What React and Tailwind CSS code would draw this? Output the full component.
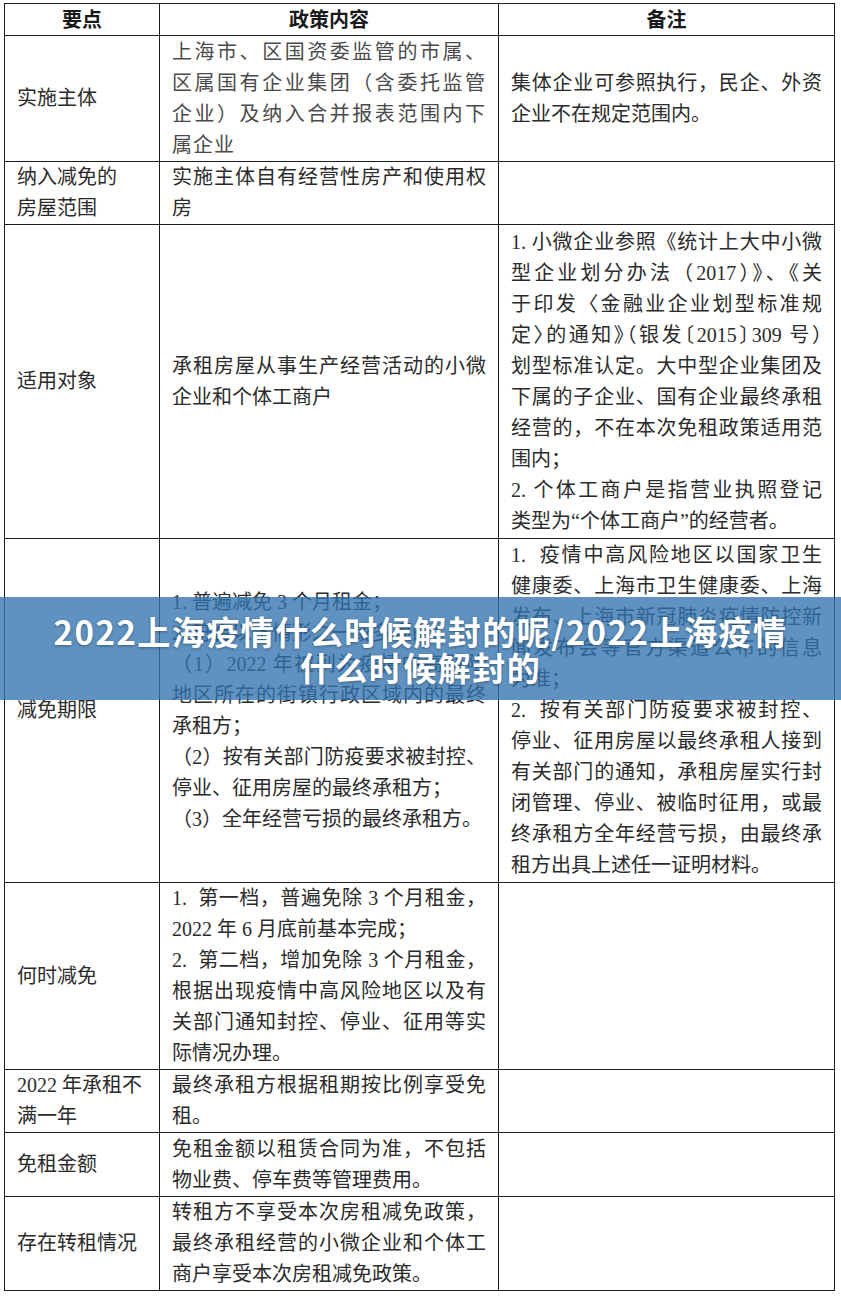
import React from 'react';

const rows = [
  {
    h: 'h-[126px]',
    c1: [['实施主体']],
    c2: [['上海市、区国资委监管的市属、', '区属国有企业集团（含委托监管', '企业）及纳入合并报表范围内下', '属企业']],
    c3: [['集体企业可参照执行，民企、外资', '企业不在规定范围内。']],
  },
  {
    h: 'h-[63px]',
    c1: [['纳入减免的', '房屋范围']],
    c2: [['实施主体自有经营性房产和使用权', '房']],
    c3: [],
  },
  {
    h: 'h-[314px]',
    c1: [['适用对象']],
    c2: [['承租房屋从事生产经营活动的小微', '企业和个体工商户']],
    c3: [
      [
        '1. 小微企业参照《统计上大中小微',
        '型企业划分办法（2017）》、《关',
        '于印发〈金融业企业划型标准规',
        '定〉的通知》（银发〔2015〕309 号）',
        '划型标准认定。大中型企业集团及',
        '下属的子企业、国有企业最终承租',
        '经营的，不在本次免租政策适用范',
        '围内；',
      ],
      ['2. 个体工商户是指营业执照登记', '类型为“个体工商户”的经营者。'],
    ],
  },
  {
    h: 'h-[344px]',
    c1: [['减免期限']],
    c2: [
      ['1. 普遍减免 3 个月租金；'],
      ['2. 符合以下情形之一或多项的：'],
      ['（1）2022 年被列为疫情中高风险', '地区所在的街镇行政区域内的最终', '承租方；'],
      ['（2）按有关部门防疫要求被封控、', '停业、征用房屋的最终承租方；'],
      ['（3）全年经营亏损的最终承租方。'],
    ],
    c3: [
      [
        '1.\u00a0\u00a0疫情中高风险地区以国家卫生',
        '健康委、上海市卫生健康委、上海',
        '发布、上海市新冠肺炎疫情防控新',
        '闻发布会等官方渠道公布的信息',
        '为准；',
      ],
      [
        '2.\u00a0\u00a0按有关部门防疫要求被封控、',
        '停业、征用房屋以最终承租人接到',
        '有关部门的通知，承租房屋实行封',
        '闭管理、停业、被临时征用，或最',
        '终承租方全年经营亏损，由最终承',
        '租方出具上述任一证明材料。',
      ],
    ],
  },
  {
    h: 'h-[187px]',
    c1: [['何时减免']],
    c2: [
      ['1.\u00a0\u00a0第一档，普遍免除 3 个月租金，', '2022 年 6 月底前基本完成；'],
      [
        '2.\u00a0\u00a0第二档，增加免除 3 个月租金，',
        '根据出现疫情中高风险地区以及有',
        '关部门通知封控、停业、征用等实',
        '际情况办理。',
      ],
    ],
    c3: [],
  },
  {
    h: 'h-[63px]',
    c1: [['2022 年承租不', '满一年']],
    c2: [['最终承租方根据租期按比例享受免', '租。']],
    c3: [],
  },
  {
    h: 'h-[64px]',
    c1: [['免租金额']],
    c2: [['免租金额以租赁合同为准，不包括', '物业费、停车费等管理费用。']],
    c3: [],
  },
  {
    h: 'h-[94px]',
    c1: [['存在转租情况']],
    c2: [['转租方不享受本次房租减免政策，', '最终承租经营的小微企业和个体工', '商户享受本次房租减免政策。']],
    c3: [],
  },
];

// every line but the last of a paragraph is stretched to the cell width, like Word does
const Cell = ({ paras, justify = true, className = '' }) => (
  <td className={`border border-[#1c1c1c] px-[12px] align-middle ${className}`}>
    {paras.map((lines, pi) =>
      lines.map((line, li) => {
        const full = justify && li < lines.length - 1;
        const tight = line.includes('〔');
        return (
          <div
            key={`${pi}-${li}`}
            className={`whitespace-nowrap ${full ? 'text-justify [text-align-last:justify]' : ''} ${
              tight ? "[font-feature-settings:'halt']" : ''
            }`}
          >
            {line}
          </div>
        );
      })
    )}
  </td>
);

export default function App() {
  return (
    <div className="relative h-[1296px] w-[841px] overflow-hidden bg-white">
      <div className="pl-[4px] pt-[3px]">
        <table className="w-[830px] table-fixed border-collapse font-['Liberation_Serif','Noto_Sans_CJK_SC',serif] text-[20px] leading-[31px] text-[#2b2b2b]">
          <colgroup>
            <col className="w-[155px]" />
            <col className="w-[339px]" />
            <col className="w-[336px]" />
          </colgroup>
          <thead>
            <tr className="h-[32px]">
              {['要点', '政策内容', '备注'].map((t) => (
                <th key={t} className="border border-[#1c1c1c] text-center text-[20px] font-bold leading-[28px] text-[#1a1a1a]">
                  {t}
                </th>
              ))}
            </tr>
          </thead>
          <tbody>
            {rows.map((r, i) => (
              <tr key={i} className={r.h}>
                <Cell paras={r.c1} justify={false} />
                <Cell paras={r.c2} className={i === 0 ? 'tracking-[1px] text-[#4a4a4a]' : ''} />
                <Cell paras={r.c3} />
              </tr>
            ))}
          </tbody>
        </table>
      </div>

      {/* title banner laid over the table */}
      <div className="absolute left-0 right-0 top-[597px] flex h-[103px] items-center justify-center bg-[rgba(50,115,175,0.78)] px-[30px] text-center">
        <h1 className="font-['Noto_Sans_CJK_SC',sans-serif] text-[33px] font-bold leading-[36px] tracking-[1.5px] text-white [text-shadow:0_1px_3px_rgba(0,0,0,0.35)]">
          2022上海疫情什么时候解封的呢/2022上海疫情
          <br />
          什么时候解封的
        </h1>
      </div>
    </div>
  );
}
